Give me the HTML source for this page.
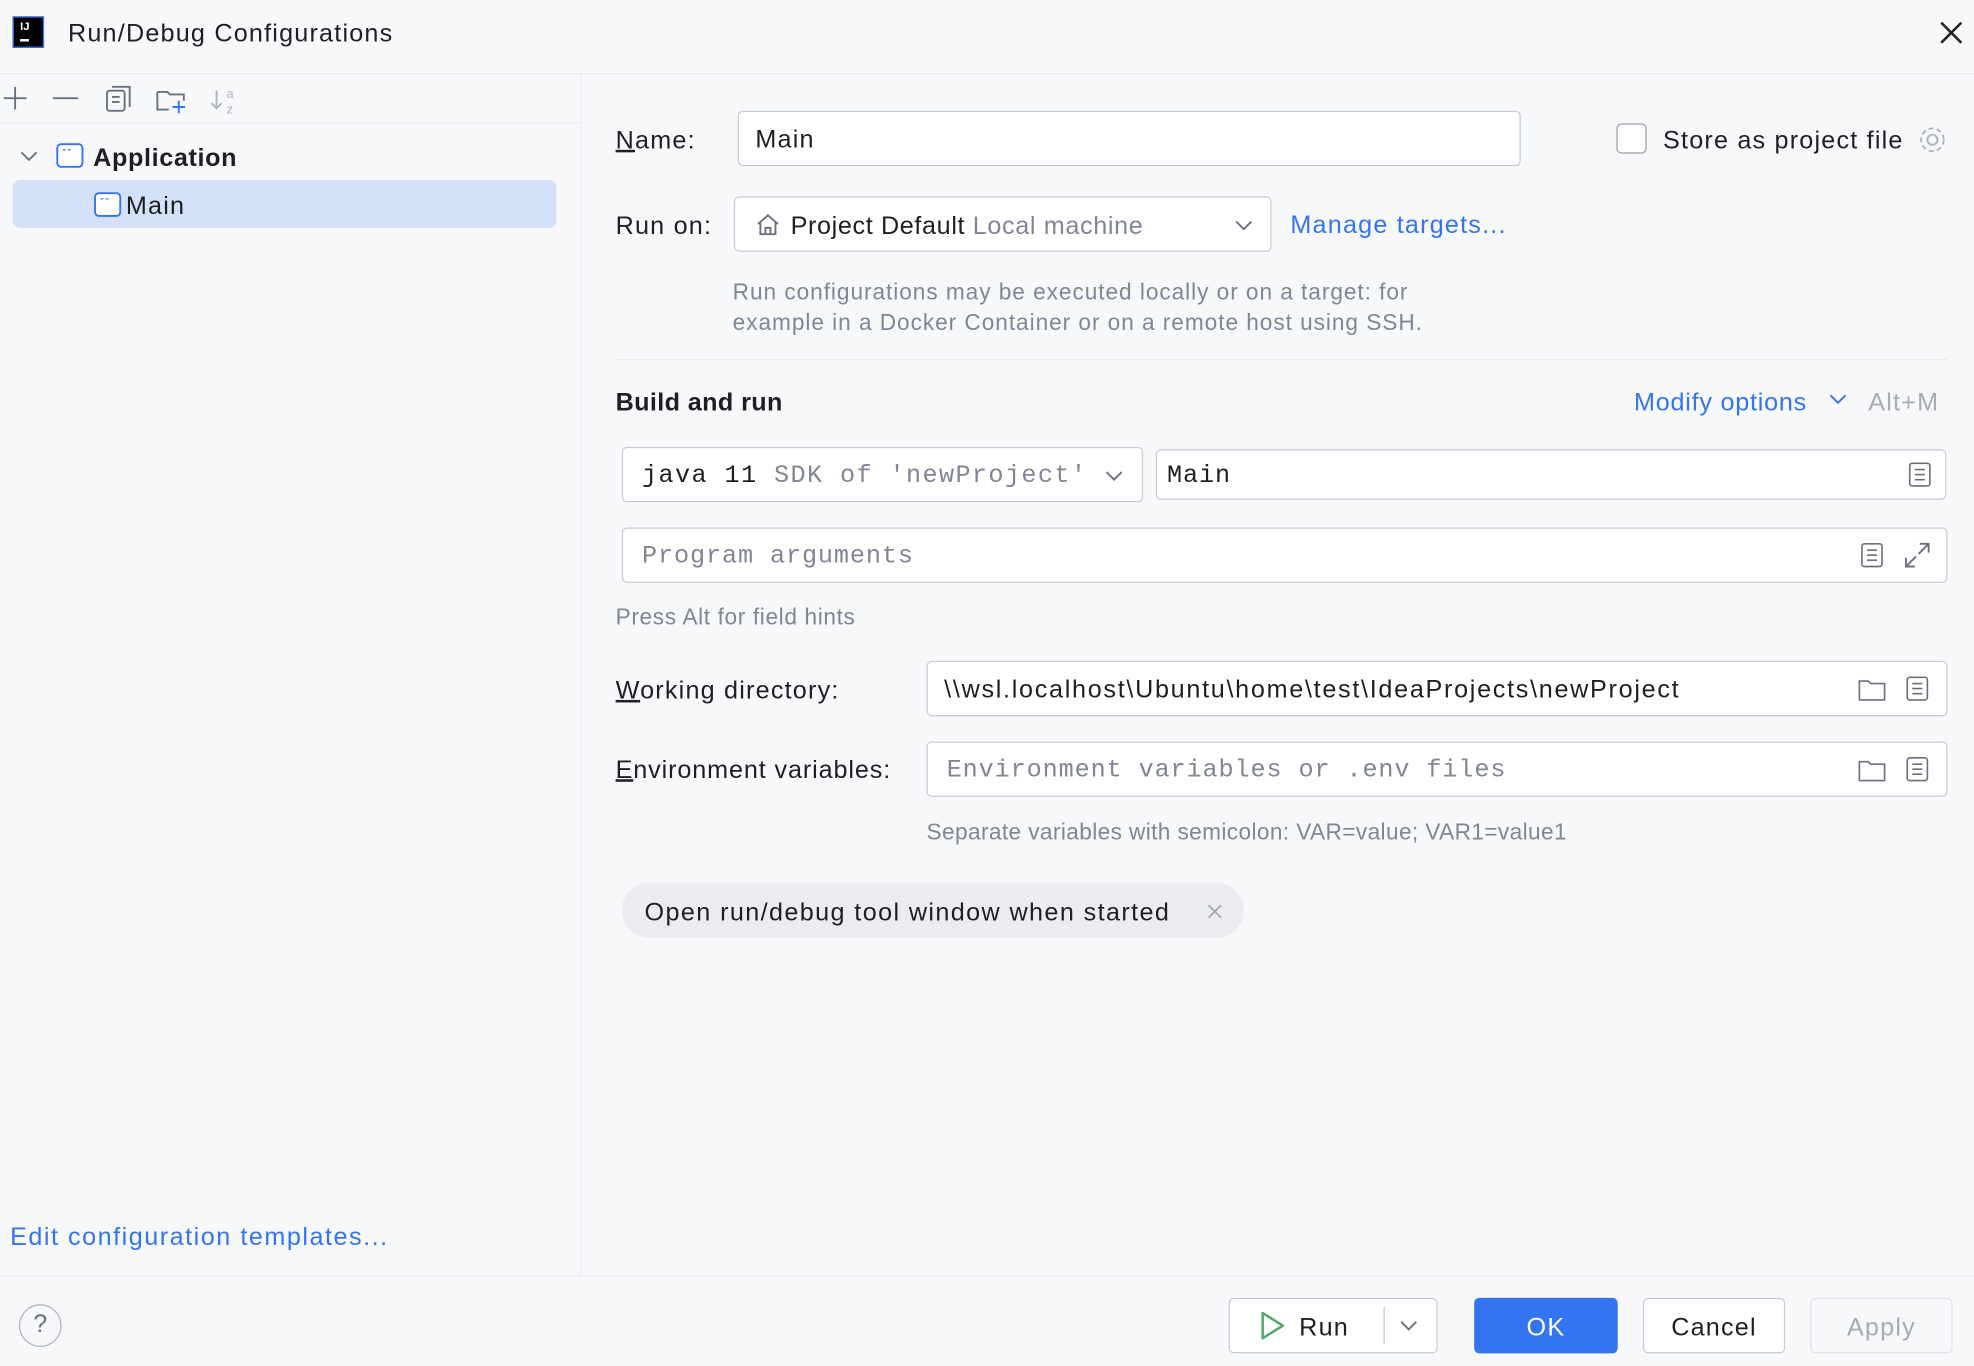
<!DOCTYPE html>
<html><head><meta charset="utf-8"><style>
html,body{margin:0;padding:0;width:1974px;height:1366px;overflow:hidden;background:#f7f8fa}
#w{position:absolute;left:0;top:0;width:1568px;height:1085px;transform:scale(1.2589);transform-origin:0 0;font-family:"Liberation Sans",sans-serif;color:#1e1f22;font-size:20px;letter-spacing:0.95px}
.a{position:absolute}
.t{margin-top:2px}
.f{position:absolute;background:#fff;border:1px solid #c9ccd6;border-radius:4px;box-sizing:border-box}
.f span{margin-top:1px}
.mono{font-family:"Liberation Mono",monospace;letter-spacing:0.7px}
.g{color:#818594}
.l{color:#3574f0}
.btn{position:absolute;border:1px solid #c9ccd6;border-radius:4px;background:#fff;box-sizing:border-box;text-align:center;line-height:42px}
u{text-decoration:underline}
</style></head><body><div id="w">
<div class="a" style="left:10px;top:13px;width:25px;height:25px;background:#000;border:1px solid #3574f0;box-sizing:border-box"><div class="a" style="left:5px;top:2px;color:#fff;font-size:9px;font-weight:bold;letter-spacing:0">IJ</div><div class="a" style="left:5px;top:17px;width:7px;height:2px;background:#fff"></div></div>
<div class="a" style="left:54px;top:16px">Run/Debug Configurations</div>
<svg class="a" style="left:1540px;top:16px" width="20" height="20"><path d="M2 2L18 18M18 2L2 18" stroke="#222" stroke-width="2"/></svg>
<div class="a" style="left:0;top:58px;width:1568px;height:1px;background:#ebecf0"></div>
<div class="a" style="left:461px;top:59px;width:1px;height:955px;background:#ebecf0"></div>
<div class="a" style="left:0;top:97px;width:461px;height:1px;background:#ebecf0"></div>
<svg class="a" style="left:0;top:66px" width="200" height="26" fill="none" stroke="#6c707e" stroke-width="1.5">
<path d="M12 3V21M3 12H21"/><path d="M42 12H62"/>
<rect x="85" y="6" width="14" height="16" rx="2"/><path d="M89 3H103V19M89 11H95M89 15H95"/>
<path d="M125 7H133L135 9H146V14M125 7V21H134"/><path d="M142 14V24M137 19H147" stroke="#3574f0"/>
<path d="M172 6V20M168 16L172 20L176 16" stroke="#b0b3bd"/><text x="180" y="12" font-size="10" fill="#b0b3bd" stroke="none">a</text><text x="180" y="24" font-size="10" fill="#b0b3bd" stroke="none">z</text>
</svg>
<svg class="a" style="left:15px;top:117px" width="16" height="14"><path d="M2 4L8 10L14 4" stroke="#6c707e" stroke-width="1.5" fill="none"/></svg>
<svg class="a" style="left:44px;top:113px" width="24" height="22"><rect x="1.5" y="1.5" width="20" height="18" rx="3" fill="#fff" stroke="#3574f0" stroke-width="1.5"/><path d="M6 6H8M10 6H12" stroke="#3574f0"/></svg>
<div class="a" style="left:74px;top:115px;font-weight:bold;letter-spacing:0.5px">Application</div>
<div class="a" style="left:10px;top:143px;width:432px;height:38px;background:#d5e1f9;border-radius:6px"></div>
<svg class="a" style="left:74px;top:152px" width="24" height="22"><rect x="1.5" y="1.5" width="20" height="18" rx="3" fill="#fff" stroke="#3574f0" stroke-width="1.5"/><path d="M6 6H8M10 6H12" stroke="#3574f0"/></svg>
<div class="a" style="left:100px;top:153px">Main</div>
<div class="a l" style="left:8px;top:972px;letter-spacing:1.2px">Edit configuration templates...</div>
<div class="a" style="left:489px;top:101px"><u>N</u>ame:</div>
<div class="f" style="left:586px;top:88px;width:622px;height:44px"><span class="a" style="left:13px;top:10px">Main</span></div>
<div class="a" style="left:1284px;top:98px;width:24px;height:24px;border:1px solid #9a9da6;border-radius:4px;background:#fff;box-sizing:border-box"></div>
<div class="a" style="left:1321px;top:101px">Store as project file</div>
<svg class="a" style="left:1523px;top:99px" width="24" height="24" fill="none" stroke="#b0b3bd" stroke-width="1.5"><circle cx="12" cy="12" r="4"/><circle cx="12" cy="12" r="9" stroke-dasharray="4 2.5"/></svg>
<div class="a" style="left:489px;top:169px">Run on:</div>
<div class="f" style="left:583px;top:156px;width:427px;height:44px"><svg class="a" style="left:15px;top:11px" width="22" height="20" fill="none" stroke="#6c707e" stroke-width="1.5"><path d="M3 10L11 3L19 10M5 8V18H17V8M9 18V13H13V18"/></svg><span class="a" style="left:44px;top:11px;letter-spacing:0.5px">Project Default <span class="g">Local machine</span></span><svg class="a" style="left:396px;top:16px" width="16" height="12"><path d="M2 3L8 9L14 3" stroke="#6c707e" stroke-width="1.5" fill="none"/></svg></div>
<div class="a l" style="left:1025px;top:168px">Manage targets...</div>
<div class="a g" style="left:582px;top:220px;font-size:18px;line-height:24px;letter-spacing:0.75px">Run configurations may be executed locally or on a target: for<br>example in a Docker Container or on a remote host using SSH.</div>
<div class="a" style="left:489px;top:285px;width:1058px;height:1px;background:#ebecf0"></div>
<div class="a" style="left:489px;top:309px;font-weight:bold;letter-spacing:0.3px">Build and run</div>
<div class="a l" style="left:1298px;top:309px;letter-spacing:0.6px">Modify options</div>
<svg class="a" style="left:1452px;top:311px" width="16" height="12"><path d="M2 3L8 9L14 3" stroke="#3574f0" stroke-width="1.5" fill="none"/></svg>
<div class="a g" style="left:1484px;top:309px;color:#a8abb3">Alt+M</div>
<div class="f" style="left:494px;top:355px;width:414px;height:44px"><span class="a mono" style="left:15px;top:10px;letter-spacing:1.1px">java 11 <span class="g">SDK of 'newProject'</span></span><svg class="a" style="left:382px;top:16px" width="16" height="12"><path d="M2 3L8 9L14 3" stroke="#6c707e" stroke-width="1.5" fill="none"/></svg></div>
<div class="f" style="left:918px;top:357px;width:628px;height:40px"><span class="a mono" style="left:8px;top:8px">Main</span><svg class="a" style="left:596px;top:8px" width="20" height="22" fill="none" stroke="#6c707e" stroke-width="1.3"><rect x="2" y="2" width="16" height="18" rx="2"/><path d="M6 7H14M6 11H14M6 15H14"/></svg></div>
<div class="f" style="left:494px;top:419px;width:1053px;height:44px"><span class="a mono g" style="left:15px;top:10px">Program arguments</span><svg class="a" style="left:982px;top:10px" width="20" height="22" fill="none" stroke="#6c707e" stroke-width="1.3"><rect x="2" y="2" width="16" height="18" rx="2"/><path d="M6 7H14M6 11H14M6 15H14"/></svg><svg class="a" style="left:1016px;top:9px" width="24" height="24" fill="none" stroke="#6c707e" stroke-width="1.5"><path d="M14 3H21V10M21 3L13 11M3 14V21H10M3 21L11 13"/></svg></div>
<div class="a g" style="left:489px;top:480px;font-size:18px;letter-spacing:0.5px">Press Alt for field hints</div>
<div class="a" style="left:489px;top:538px"><u>W</u>orking directory:</div>
<div class="f" style="left:736px;top:525px;width:811px;height:44px"><span class="a" style="left:13px;top:10px;letter-spacing:1.35px">\\wsl.localhost\Ubuntu\home\test\IdeaProjects\newProject</span>
<svg class="a" style="left:738px;top:11px" width="24" height="22" fill="none" stroke="#6c707e" stroke-width="1.3"><path d="M2 4H9L11 6H22V19H2Z"/></svg><svg class="a" style="left:776px;top:10px" width="20" height="22" fill="none" stroke="#6c707e" stroke-width="1.3"><rect x="2" y="2" width="16" height="18" rx="2"/><path d="M6 7H14M6 11H14M6 15H14"/></svg></div>
<div class="a" style="left:489px;top:601px;letter-spacing:0.7px"><u>E</u>nvironment variables:</div>
<div class="f" style="left:736px;top:589px;width:811px;height:44px"><span class="a mono g" style="left:15px;top:10px">Environment variables or .env files</span>
<svg class="a" style="left:738px;top:11px" width="24" height="22" fill="none" stroke="#6c707e" stroke-width="1.3"><path d="M2 4H9L11 6H22V19H2Z"/></svg><svg class="a" style="left:776px;top:10px" width="20" height="22" fill="none" stroke="#6c707e" stroke-width="1.3"><rect x="2" y="2" width="16" height="18" rx="2"/><path d="M6 7H14M6 11H14M6 15H14"/></svg></div>
<div class="a g" style="left:736px;top:651px;font-size:18px;letter-spacing:0.3px">Separate variables with semicolon: VAR=value; VAR1=value1</div>
<div class="a" style="left:494px;top:701px;width:494px;height:44px;background:#ebecf0;border-radius:22px"></div>
<div class="a" style="left:512px;top:714px;letter-spacing:1.1px">Open run/debug tool window when started</div>
<svg class="a" style="left:958px;top:717px" width="14" height="14"><path d="M2 2L12 12M12 2L2 12" stroke="#a8abb3" stroke-width="1.5"/></svg>
<div class="a" style="left:0;top:1013px;width:1568px;height:1px;background:#ebecf0"></div>
<div class="a" style="left:15px;top:1036px;width:34px;height:34px;border:1.5px solid #b0b3bd;border-radius:50%;box-sizing:border-box;text-align:center;line-height:31px;color:#6c707e;letter-spacing:0">?</div>
<div class="btn" style="left:976px;top:1031px;width:166px;height:44px"></div>
<svg class="a" style="left:1000px;top:1041px" width="22" height="24"><path d="M3 2L19 12L3 22Z" fill="none" stroke="#55a76a" stroke-width="2" stroke-linejoin="round"/></svg>
<div class="a" style="left:1032px;top:1044px">Run</div>
<div class="a" style="left:1099px;top:1038px;width:1px;height:30px;background:#c9ccd6"></div>
<svg class="a" style="left:1111px;top:1047px" width="16" height="12"><path d="M2 3L8 9L14 3" stroke="#6c707e" stroke-width="1.5" fill="none"/></svg>
<div class="btn" style="left:1171px;top:1031px;width:114px;height:44px;background:#3574f0;border-color:#3574f0;color:#fff;line-height:46px">OK</div>
<div class="btn" style="left:1305px;top:1031px;width:113px;height:44px;line-height:46px">Cancel</div>
<div class="btn" style="left:1438px;top:1031px;width:113px;height:44px;border-color:#dfe1e5;background:#f7f8fa;color:#a8abb3;line-height:46px">Apply</div>
</div></body></html>
